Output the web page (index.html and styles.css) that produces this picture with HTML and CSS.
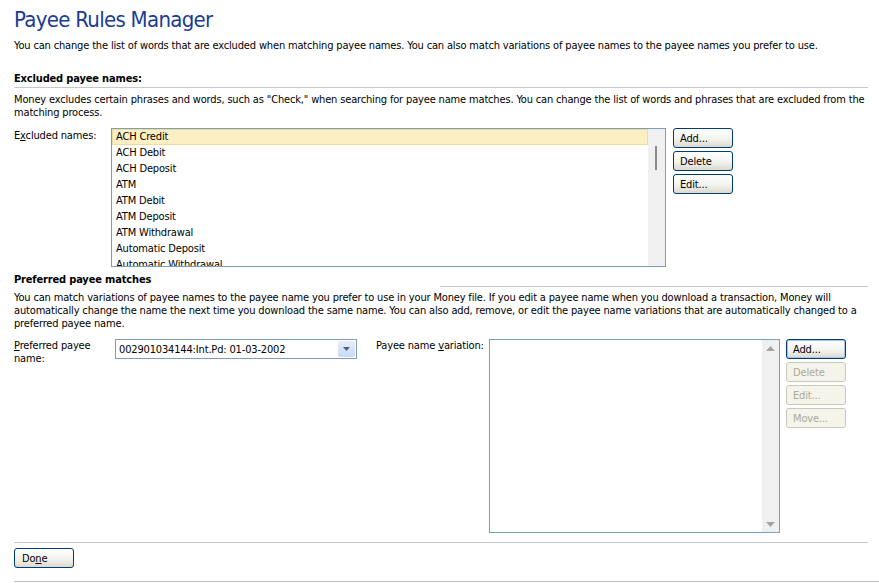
FILE: index.html
```html
<!DOCTYPE html>
<html lang="en">
<head>
<meta charset="utf-8">
<title>Payee Rules Manager</title>
<link rel="stylesheet" href="styles.css">
</head>
<body>
<div class="page">
  <h1 class="title">Payee Rules Manager</h1>
  <p class="intro">You can change the list of words that are excluded when matching payee names. You can also match variations of payee names to the payee names you prefer to use.</p>

  <h2 class="section-head">Excluded payee names:</h2>
  <p class="desc">Money excludes certain phrases and words, such as "Check," when searching for payee name matches. You can change the list of words and phrases that are excluded from the<br>matching process.</p>
  <div class="row row-excluded">
    <label class="field-label label-excluded">E<u>x</u>cluded names:</label>
    <div class="listbox list-excluded">
      <ul class="items">
        <li class="item selected">ACH Credit</li>
        <li class="item">ACH Debit</li>
        <li class="item">ACH Deposit</li>
        <li class="item">ATM</li>
        <li class="item">ATM Debit</li>
        <li class="item">ATM Deposit</li>
        <li class="item">ATM Withdrawal</li>
        <li class="item">Automatic Deposit</li>
        <li class="item">Automatic Withdrawal</li>
      </ul>
      <div class="vscroll"><div class="thumb"></div></div>
    </div>
    <div class="btn-col btn-col-excluded">
      <button class="btn">Add...</button>
      <button class="btn">Delete</button>
      <button class="btn">Edit...</button>
    </div>
  </div>

  <div class="section-head2">
    <h2 class="section-title">Preferred payee matches</h2>
    <div class="head-rule"></div>
  </div>
  <p class="desc desc2">You can match variations of payee names to the payee name you prefer to use in your Money file. If you edit a payee name when you download a transaction, Money will<br>automatically change the name the next time you download the same name. You can also add, remove, or edit the payee name variations that are automatically changed to a<br>preferred payee name.</p>
  <div class="row row-preferred">
    <label class="field-label label-preferred"><u>P</u>referred payee name:</label>
    <div class="combo">
      <span class="combo-text">002901034144:Int.Pd: 01-03-2002</span>
      <span class="combo-btn"><svg width="7" height="4" viewBox="0 0 7 4"><path d="M0 0h7L3.5 4z" fill="#4d6185"/></svg></span>
    </div>
    <label class="field-label label-variation">Payee name <u>v</u>ariation:</label>
    <div class="listbox list-variation">
      <div class="items"></div>
      <div class="vscroll vscroll-arrows">
        <svg width="9" height="5" viewBox="0 0 9 5"><path d="M4.5 0L9 5H0z" fill="#a3a3a3"/></svg>
        <svg width="9" height="5" viewBox="0 0 9 5"><path d="M0 0h9L4.5 5z" fill="#a3a3a3"/></svg>
      </div>
    </div>
    <div class="btn-col btn-col-variation">
      <button class="btn btn-default">Add...</button>
      <button class="btn" disabled>Delete</button>
      <button class="btn" disabled>Edit...</button>
      <button class="btn" disabled>Move...</button>
    </div>
  </div>

  <div class="footer">
    <button class="btn btn-done">Do<u>n</u>e</button>
  </div>
  <div class="bottom-rule"></div>
</div>
</body>
</html>
```
FILE: styles.css
```css
* { box-sizing: border-box; }
html, body { margin: 0; padding: 0; background: #fff; }
body {
  font-family: "DejaVu Sans Condensed", "DejaVu Sans", sans-serif;
  font-size: 11px;
  line-height: 13px;
  letter-spacing: -0.16px;
  color: #000;
}
.page {
  padding: 7px 11px 0 14px;
  display: flex;
  flex-direction: column;
}
.title {
  margin: 0;
  font-size: 22px;
  line-height: 26px;
  letter-spacing: -0.7px;
  font-weight: normal;
  color: #1c3c91;
}
.intro { margin: 6px 0 0; white-space: nowrap; }
.section-head {
  margin: 20px 0 0;
  font-size: 11px;
  line-height: 13px;
  font-weight: bold;
  padding-bottom: 2px;
  border-bottom: 1px solid #c8c8c8;
}
.desc { margin: 5px 0 0; white-space: nowrap; }
.row { display: flex; align-items: flex-start; }
.row-excluded { margin-top: 9px; }
.field-label { padding-top: 1px; }
.label-excluded { width: 97px; }
.listbox {
  border: 1px solid #7f9db9;
  display: flex;
  background: #fff;
}
.list-excluded { width: 555px; height: 139px; }
.items {
  list-style: none;
  margin: 0;
  padding: 0;
  flex: 1;
  overflow: hidden;
}
.item {
  height: 16px;
  line-height: 16px;
  padding-left: 4px;
  white-space: nowrap;
}
.item.selected {
  background: #fdeec3;
  border: 1px solid #eedc9f;
  line-height: 14px;
  padding-left: 3px;
}
.vscroll {
  width: 17px;
  background: #f0f0f0;
  flex: none;
}
.thumb {
  margin: 17px 0 0 7px;
  width: 2px;
  height: 24px;
  background: #8a8a8a;
}
.vscroll-arrows {
  display: flex;
  flex-direction: column;
  justify-content: space-between;
  align-items: center;
  padding: 6px 0 5px;
}
.btn-col { display: flex; flex-direction: column; gap: 3px; }
.btn-col-excluded { margin-left: 7px; }
.btn-col-variation { margin-left: 6px; }
.btn {
  width: 60px;
  height: 20px;
  font: inherit;
  letter-spacing: inherit;
  text-align: left;
  padding: 0 0 0 6px;
  border: 1px solid #003c74;
  border-radius: 3px;
  background: linear-gradient(#ffffff, #f3f3ee 55%, #dcd8cd);
  color: #000;
}
.btn-default { box-shadow: inset 0 0 0 1px #a9c4ee; }
.btn:disabled {
  border-color: #cac8bb;
  background: #f5f4ea;
  color: #aca899;
}
.section-head2 {
  margin-top: 6px;
  display: flex;
  align-items: flex-end;
}
.section-title {
  margin: 0;
  font-size: 11px;
  line-height: 13px;
  font-weight: bold;
}
.head-rule {
  margin: 0 0 -1px auto;
  width: 428px;
  height: 1px;
  background: #c8c8c8;
}
.desc2 { margin-top: 5px; }
.row-preferred { margin-top: 9px; }
.label-preferred { width: 101px; padding-top: 0; }
.combo {
  width: 242px;
  height: 20px;
  border: 1px solid #7f9db9;
  display: flex;
  align-items: center;
  padding: 1px;
}
.combo-text { flex: 1; padding-left: 2px; white-space: nowrap; }
.combo-btn {
  width: 17px;
  height: 16px;
  border-radius: 2px;
  background: linear-gradient(#e6eefc, #c9d8f5);
  display: flex;
  align-items: center;
  justify-content: center;
}
.label-variation { margin-left: 19px; width: 113px; padding-top: 0; }
.list-variation { width: 291px; height: 194px; }
.footer {
  margin-top: 9px;
  border-top: 1px solid #c8c8c8;
  padding-top: 5px;
}
.btn-done { padding-left: 7px; }
.bottom-rule {
  margin: 13px -11px 0 0;
  border-top: 1px solid #c0c0c0;
}
```
